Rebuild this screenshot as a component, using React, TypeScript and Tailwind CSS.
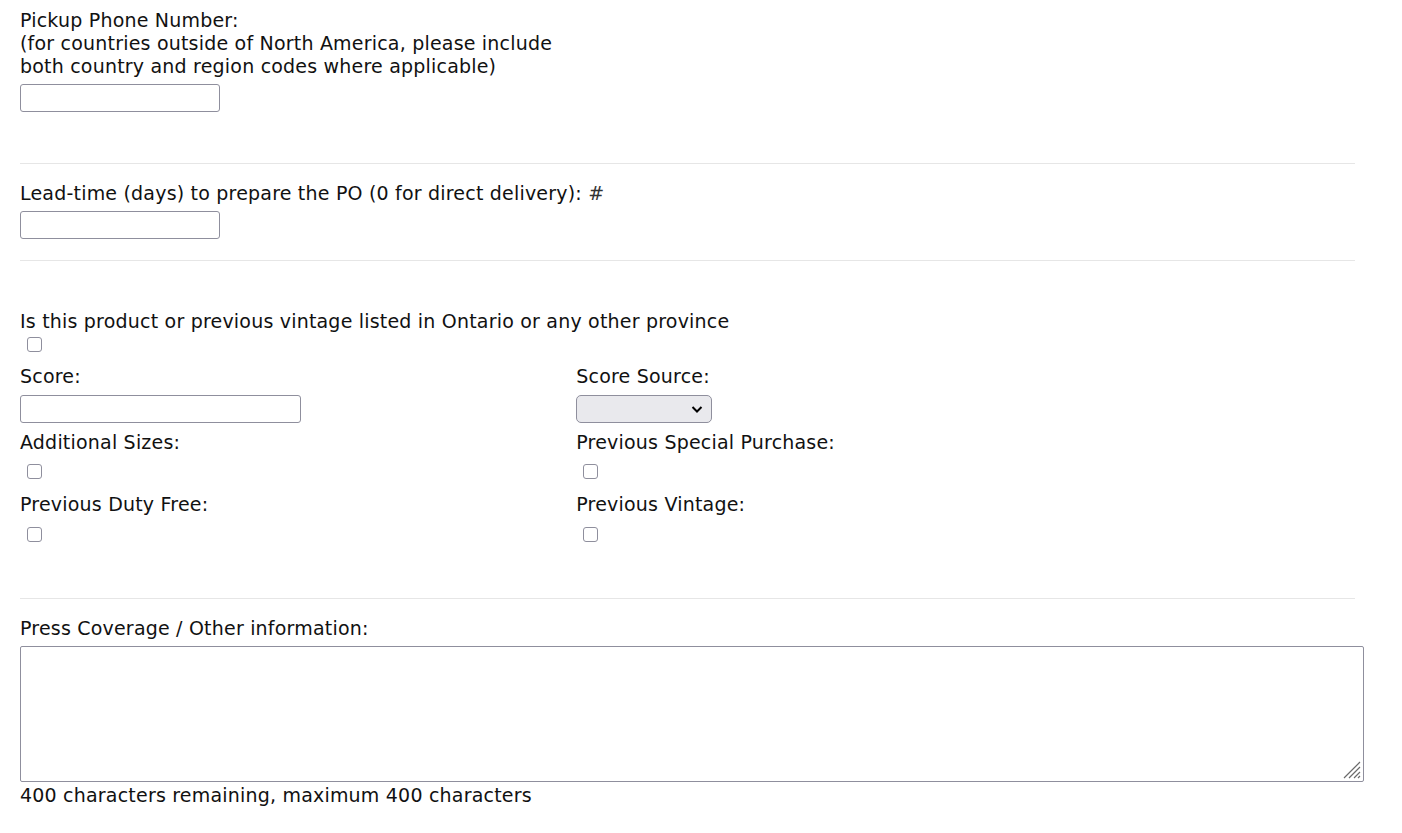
import React from 'react';

const Check: React.FC = () => (
  <input
    type="checkbox"
    className="appearance-none block w-[15px] h-[15px] ml-[7px] border-[1.5px] border-[#8f8f9d] rounded-[3px] bg-white"
  />
);

const TextInput: React.FC<{ w: string }> = ({ w }) => (
  <input
    type="text"
    className={`block h-[28px] ${w} border border-[#8f8f9d] rounded-[3px] bg-white outline-none`}
  />
);

export default function App() {
  return (
    <div className="bg-white min-h-screen text-[#111] font-['DejaVu_Sans',sans-serif] text-[19px] tracking-[0.2px] leading-[23px]">
      <div className="pl-5 pt-[9px] w-[1355px]">
        {/* pickup phone */}
        <div>
          Pickup Phone Number:
          <br />
          (for countries outside of North America, please include
          <br />
          both country and region codes where applicable)
        </div>
        <div className="mt-[6px]">
          <TextInput w="w-[200px]" />
        </div>
        <div className="mt-[51px] border-t border-[#e6e6e6]" />

        {/* lead time */}
        <div className="mt-[18px]">
          Lead-time (days) to prepare the PO (0 for direct delivery): <span className="text-[#333]">#</span>
        </div>
        <div className="mt-[6px]">
          <TextInput w="w-[200px]" />
        </div>
        <div className="mt-[21px] border-t border-[#e6e6e6]" />

        {/* listing info */}
        <div className="mt-[49px]">Is this product or previous vintage listed in Ontario or any other province</div>
        <div className="mt-[4px]">
          <Check />
        </div>
        <div className="grid grid-cols-12 mt-[13px]">
          <div className="col-span-5">
            <div>Score:</div>
            <div className="mt-[7px]">
              <TextInput w="w-[281px]" />
            </div>
          </div>
          <div className="col-span-5">
            <div>Score Source:</div>
            <div className="mt-[7px] relative w-[136px] h-[28px] rounded-[5px] border border-[#8f8f9d] bg-[#e9e9ed]">
              <svg className="absolute right-[8px] top-[9px]" width="12" height="9" viewBox="0 0 12 9">
                <path d="M1.5 2 L6 6.5 L10.5 2" fill="none" stroke="#000" strokeWidth="2" />
              </svg>
            </div>
          </div>
        </div>
        <div className="grid grid-cols-12 mt-[8px]">
          <div className="col-span-5">
            <div>Additional Sizes:</div>
            <div className="mt-[10px]">
              <Check />
            </div>
          </div>
          <div className="col-span-5">
            <div>Previous Special Purchase:</div>
            <div className="mt-[10px]">
              <Check />
            </div>
          </div>
        </div>
        <div className="grid grid-cols-12 mt-[14px]">
          <div className="col-span-5">
            <div>Previous Duty Free:</div>
            <div className="mt-[11px]">
              <Check />
            </div>
          </div>
          <div className="col-span-5">
            <div>Previous Vintage:</div>
            <div className="mt-[11px]">
              <Check />
            </div>
          </div>
        </div>
        <div className="mt-[56px] w-[1335px] border-t border-[#e6e6e6]" />

        {/* press coverage */}
        <div className="mt-[18px]">Press Coverage / Other information:</div>
        <div className="mt-[6px] relative w-[1344px] h-[136px]">
          <textarea className="block w-full h-full resize-none border border-[#8f8f9d] rounded-[2px] bg-white outline-none" />
          <svg className="absolute right-[3px] bottom-[3px]" width="20" height="20" viewBox="0 0 20 20">
            <path d="M19 3 L3 19 M19 8 L8 19 M19 13 L13 19 M19 17 L17 19" stroke="#6b6b6b" strokeWidth="1.2" fill="none" />
          </svg>
        </div>
        <div className="mt-[2px]">400 characters remaining, maximum 400 characters</div>
      </div>
    </div>
  );
}
